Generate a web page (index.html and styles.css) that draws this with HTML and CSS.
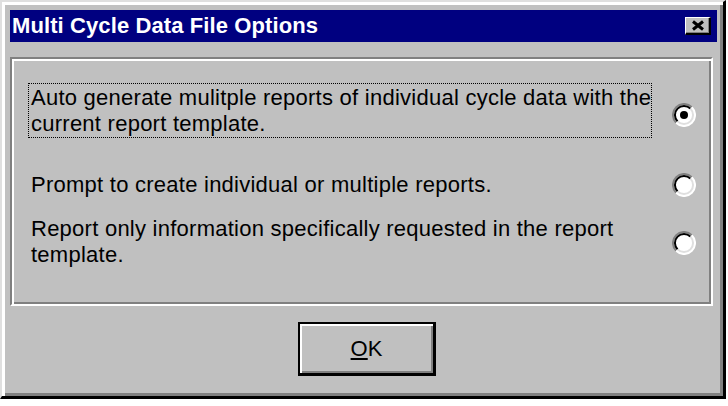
FILE: index.html
```html
<!DOCTYPE html>
<html>
<head>
<meta charset="utf-8">
<link rel="stylesheet" href="styles.css">
</head>
<body>
<div class="window">
  <div class="titlebar">
    <span class="title">Multi Cycle Data File Options</span>
    <div class="close">
      <svg width="14" height="11" viewBox="0 0 14 11"><path d="M2 1.5 L12 9.5 M12 1.5 L2 9.5" stroke="#000" stroke-width="3" fill="none"/></svg>
    </div>
  </div>
  <div class="content">
    <div class="group">
      <div class="row row1">
        <div class="label focus">Auto generate mulitple reports of individual cycle data with the<br>current report template.</div>
        <div class="radio radio-low">
          <svg width="24" height="24" viewBox="0 0 24 24">
            <circle cx="12" cy="12" r="11" fill="#fff"/>
            <path d="M4.2 19.8 A11 11 0 0 1 19.8 4.2" stroke="#808080" stroke-width="2" fill="none"/>
            <path d="M5.6 18.4 A9 9 0 0 1 18.4 5.6" stroke="#000" stroke-width="2" fill="none"/>
            <path d="M19.8 4.2 A11 11 0 0 1 4.2 19.8" stroke="#fff" stroke-width="2" fill="none"/>
            <path d="M18.4 5.6 A9 9 0 0 1 5.6 18.4" stroke="#dfdfdf" stroke-width="2" fill="none"/>
            <circle cx="12" cy="12" r="4" fill="#000"/>
          </svg>
        </div>
      </div>
      <div class="row row2">
        <div class="label">Prompt to create individual or multiple reports.</div>
        <div class="radio">
          <svg width="24" height="24" viewBox="0 0 24 24">
            <circle cx="12" cy="12" r="11" fill="#fff"/>
            <path d="M4.2 19.8 A11 11 0 0 1 19.8 4.2" stroke="#808080" stroke-width="2" fill="none"/>
            <path d="M5.6 18.4 A9 9 0 0 1 18.4 5.6" stroke="#000" stroke-width="2" fill="none"/>
            <path d="M19.8 4.2 A11 11 0 0 1 4.2 19.8" stroke="#fff" stroke-width="2" fill="none"/>
            <path d="M18.4 5.6 A9 9 0 0 1 5.6 18.4" stroke="#dfdfdf" stroke-width="2" fill="none"/>
          </svg>
        </div>
      </div>
      <div class="row row3">
        <div class="label">Report only information specifically requested in the report<br>template.</div>
        <div class="radio radio-low2">
          <svg width="24" height="24" viewBox="0 0 24 24">
            <circle cx="12" cy="12" r="11" fill="#fff"/>
            <path d="M4.2 19.8 A11 11 0 0 1 19.8 4.2" stroke="#808080" stroke-width="2" fill="none"/>
            <path d="M5.6 18.4 A9 9 0 0 1 18.4 5.6" stroke="#000" stroke-width="2" fill="none"/>
            <path d="M19.8 4.2 A11 11 0 0 1 4.2 19.8" stroke="#fff" stroke-width="2" fill="none"/>
            <path d="M18.4 5.6 A9 9 0 0 1 5.6 18.4" stroke="#dfdfdf" stroke-width="2" fill="none"/>
          </svg>
        </div>
      </div>
    </div>
    <div class="buttons">
      <div class="button"><span class="ul">O</span>K</div>
    </div>
  </div>
</div>
</body>
</html>
```
FILE: styles.css
```css
html, body {
  margin: 0;
  padding: 0;
  background: #ffffff;
}
.window {
  box-sizing: border-box;
  width: 726px;
  height: 399px;
  background: #c0c0c0;
  border-style: solid;
  border-width: 2px 3px 3px 2px;
  border-color: #dfdfdf #000000 #000000 #dfdfdf;
  box-shadow: inset 3px 3px #ffffff, inset -3px -3px #808080;
  padding: 8px 6px 6px 8px;
  font-family: "Liberation Sans", Arial, sans-serif;
  color: #000;
  display: flex;
  flex-direction: column;
}
.titlebar {
  height: 32px;
  background: #000080;
  display: flex;
  align-items: center;
  justify-content: space-between;
  padding: 0 6px 0 2px;
}
.title {
  color: #fff;
  font-weight: bold;
  font-size: 22px;
  letter-spacing: 0.1px;
  line-height: 32px;
}
.close {
  box-sizing: border-box;
  width: 26px;
  height: 18px;
  background: #c0c0c0;
  border-style: solid;
  border-width: 1px 2px 2px 1px;
  border-color: #fff #000 #000 #fff;
  box-shadow: inset -1px -1px #808080;
  display: flex;
  align-items: center;
  justify-content: center;
}
.close svg { display: block; }
.content {
  flex: 1;
  display: flex;
  flex-direction: column;
  padding: 15px 4px 0 0;
}
.group {
  box-sizing: border-box;
  height: 249px;
  border: 2px solid;
  border-color: #808080 #ffffff #ffffff #808080;
  box-shadow: inset 2px 2px #ffffff, inset -2px -2px #808080;
  padding: 24px 14px 0 16px;
  display: flex;
  flex-direction: column;
}
.row {
  display: flex;
  align-items: center;
}
.row2 { margin-top: 32px; }
.row3 { margin-top: 15px; }
.label {
  flex: 0 0 623px;
  box-sizing: border-box;
  font-size: 22px;
  letter-spacing: 0.25px;
  line-height: 26px;
  border: 1px dotted transparent;
  padding: 1px 0 0 2px;
  white-space: nowrap;
}
.label.focus {
  border-color: #000;
}
.radio {
  margin-left: auto;
  margin-right: 1px;
  width: 24px;
  height: 24px;
}
.radio svg { display: block; }
.radio-low { margin-top: 8px; }
.radio-low2 { margin-top: 2px; }
.buttons {
  display: flex;
  justify-content: center;
  padding: 16px 0 0 11px;
}
.button {
  box-sizing: border-box;
  width: 138px;
  height: 54px;
  border-style: solid;
  border-width: 2px 3px 3px 2px;
  border-color: #000;
  box-shadow: inset 2px 2px #ffffff, inset -2px -2px #808080;
  background: #c0c0c0;
  display: flex;
  align-items: center;
  justify-content: center;
  font-size: 22px;
  color: #000;
}
.ul { text-decoration: underline; }
```
